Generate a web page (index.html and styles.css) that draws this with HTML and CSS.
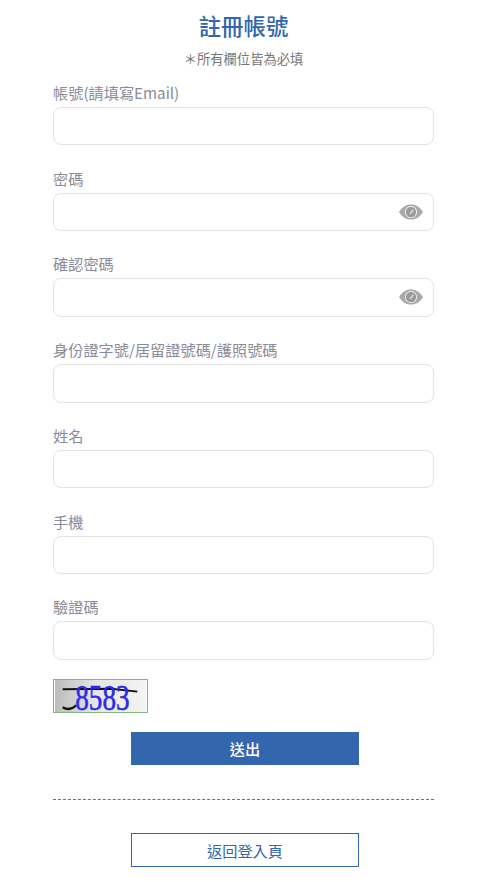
FILE: index.html
```html
<!DOCTYPE html>
<html lang="zh-Hant">
<head>
  <meta charset="UTF-8" />
  <meta name="viewport" content="width=device-width, initial-scale=1.0"/>
  <title>註冊帳號</title>
  <link rel="stylesheet" href="styles.css">
</head>
<body>

<div class="register">
  <h2 class="title">註冊帳號</h2>
  <p class="note">＊所有欄位皆為必填</p>

  <form class="form">
    <div class="field">
      <label>帳號(請填寫Email)</label>
      <input type="text">
    </div>

    <div class="field">
      <label>密碼</label>
      <div class="password">
        <input type="password">
        <svg class="eye" viewBox="0 0 24 16">
          <path fill="#aaa" fill-rule="evenodd" d="M0 8C3 3 7 .5 12 .5S21 3 24 8c-3 5-7 7.5-12 7.5S3 13 0 8zm12-6a6 6 0 1 0 0 12 6 6 0 0 0 0-12z"/>
          <circle cx="12" cy="8" r="5.2" fill="#999"/>
          <path fill="#ddd" d="M13.8 5.2l1.2.9-3.4 4.4-1.2-.9z"/>
        </svg>
      </div>
    </div>

    <div class="field">
      <label>確認密碼</label>
      <div class="password">
        <input type="password">
        <svg class="eye" viewBox="0 0 24 16">
          <path fill="#aaa" fill-rule="evenodd" d="M0 8C3 3 7 .5 12 .5S21 3 24 8c-3 5-7 7.5-12 7.5S3 13 0 8zm12-6a6 6 0 1 0 0 12 6 6 0 0 0 0-12z"/>
          <circle cx="12" cy="8" r="5.2" fill="#999"/>
          <path fill="#ddd" d="M13.8 5.2l1.2.9-3.4 4.4-1.2-.9z"/>
        </svg>
      </div>
    </div>

    <div class="field">
      <label>身份證字號/居留證號碼/護照號碼</label>
      <input type="text">
    </div>

    <div class="field">
      <label>姓名</label>
      <input type="text">
    </div>

    <div class="field">
      <label>手機</label>
      <input type="text">
    </div>

    <div class="field captcha-field">
      <label>驗證碼</label>
      <input type="text">
    </div>

    <svg class="captcha" viewBox="0 0 94 33">
      <defs>
        <linearGradient id="captchaBg" x1="0" x2="1" y1="0" y2="0">
          <stop offset="0" stop-color="#b9bdb9"/>
          <stop offset="0.45" stop-color="#e6e6e4"/>
          <stop offset="1" stop-color="#f4f4f4"/>
        </linearGradient>
      </defs>
      <rect width="94" height="33" fill="url(#captchaBg)"/>
      <path d="M8 9.5L58 9l27 3" stroke="#111" stroke-width="2" fill="none"/>
      <path d="M8 28c5 3 10 2 14-2" stroke="#111" stroke-width="2.4" fill="none"/>
      <text class="captcha-text" x="21" y="31" textLength="56" lengthAdjust="spacingAndGlyphs">8583</text>
    </svg>

    <button type="button" class="btn-submit">送出</button>
  </form>

  <hr class="divider">

  <a class="btn-back" href="#">返回登入頁</a>
</div>

</body>
</html>
```

FILE: styles.css
```css
* {
  box-sizing: border-box;
}

body {
  margin: 0;
  background: white;
  font-family: "Noto Sans CJK TC", "Noto Sans", sans-serif;
}

.register {
  width: 381px;
  margin-left: 53px;
  padding-top: 7px;
}

.title {
  margin: 0;
  font-size: 22.4px;
  line-height: 36px;
  font-weight: 500;
  color: #3366ad;
  text-align: center;
}

.note {
  margin: 6px 0 0;
  font-size: 13.3px;
  line-height: 20px;
  color: #777;
  text-align: center;
}

.form {
  margin-top: 11px;
}

.field {
  margin-bottom: 20.34px;
}

.field label {
  display: block;
  margin-bottom: 3px;
  font-size: 15.2px;
  line-height: 24px;
  color: #8a8a9a;
}

.field input {
  display: block;
  width: 100%;
  height: 38.4px;
  border: 1px solid #e3e3e3;
  border-radius: 8px;
  background: white;
}

.password {
  position: relative;
}

.eye {
  position: absolute;
  right: 11px;
  top: 11px;
  width: 24px;
  height: 16px;
}

.captcha-field {
  margin-bottom: 19.1px;
}

.captcha {
  display: block;
  width: 95px;
  height: 34px;
  border: 1px solid #7fb77a;
}

.captcha-text {
  font-family: "Liberation Serif", serif;
  font-size: 36px;
  stroke: #2a2ae8;
  stroke-width: 0.6px;
  fill: #2a2ae8;
}

.btn-submit {
  display: block;
  width: 228px;
  height: 33px;
  margin: 19px 0 0 78px;
  border: none;
  background: #3366ad;
  color: white;
  font-family: inherit;
  font-size: 15.2px;
  font-weight: 500;
}

.divider {
  margin: 34px 0 33px;
  border: none;
  border-top: 1px dashed #7a6f5f;
}

.btn-back {
  display: block;
  width: 228px;
  height: 34px;
  margin-left: 78px;
  border: 1px solid #3366ad;
  color: #3366ad;
  font-size: 15.2px;
  line-height: 33px;
  text-align: center;
  text-decoration: none;
}
```
